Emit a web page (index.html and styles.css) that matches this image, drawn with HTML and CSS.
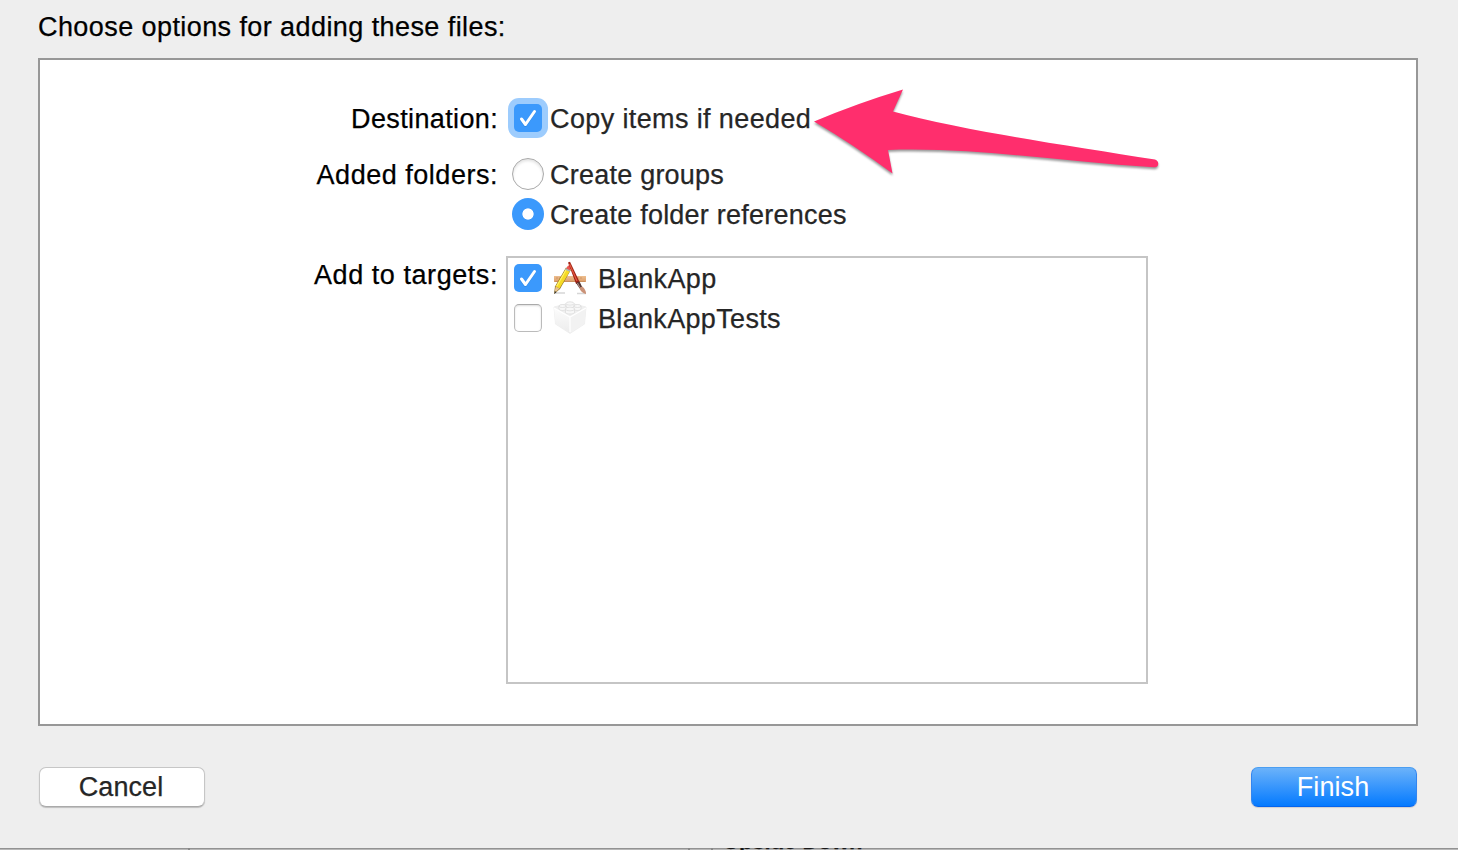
FILE: index.html
```html
<!DOCTYPE html>
<html lang="en">
<head>
<meta charset="utf-8">
<title>Add Files</title>
<link rel="stylesheet" href="styles.css">
</head>
<body>
<div class="backdrop"><span class="backdrop-label">Upside Down</span><i class="tick tick-a"></i><i class="tick tick-b"></i><i class="tick tick-c"></i></div>
<main class="sheet">
  <h1 class="title">Choose options for adding these files:</h1>
  <section class="panel">
    <div class="row row-destination">
      <span class="label destination">Destination:</span>
      <label class="option"><span class="slot"><span class="check checked focused"><svg viewBox="0 0 28 28"><path class="tick-shadow" d="M7.500 16l4 5.500L20.500 8"/><path class="tick-mark" d="M7.500 15l4 5.500L20.500 7.500"/></svg></span></span><span class="copy">Copy items if needed</span></label>
    </div>
    <div class="row row-folders">
      <span class="label folders">Added folders:</span>
      <div class="options">
        <label class="option"><span class="slot"><span class="radio"></span></span><span class="groups">Create groups</span></label>
        <label class="option"><span class="slot"><span class="radio selected"></span></span><span class="refs">Create folder references</span></label>
      </div>
    </div>
    <div class="row row-targets">
      <span class="label targets-label">Add to targets:</span>
      <div class="targets">
        <div class="target"><span class="check checked"><svg viewBox="0 0 28 28"><path class="tick-shadow" d="M7.500 16l4 5.500L20.500 8"/><path class="tick-mark" d="M7.500 15l4 5.500L20.500 7.500"/></svg></span>
          <svg class="icon" viewBox="0 0 36 36">
            <defs><linearGradient id="wood" x2="0" y2="1"><stop stop-color="#edbf90"/><stop offset="1" stop-color="#dc9c68"/></linearGradient></defs>
            <path d="M3 33h10M25 33.500h9" stroke="#bbb" stroke-width="1.500" opacity=".6"/>
            <path d="M2 16h32v6H2z" fill="url(#wood)"/>
            <path d="M3 21.500h30M5 17v2m3-2v2m3-2v2m12-2v2m3-2v2m3-2v2" stroke="#c48a58" stroke-width=".7"/>
            <path d="M14 7.500L3 26.500 2 34l6-5L18.800 10z" fill="#8b7023"/>
            <path d="M14.200 8.500L3.700 26.500l3.800 2L18.300 10.500z" fill="#f6da25"/>
            <path d="M14.500 9L4.800 26" stroke="#fff46a" stroke-width="1.200"/>
            <path d="M3.700 26.500L2.300 33.500 7.500 28.500z" fill="#e9c38f"/><path d="M2.900 31L2.300 34l2.200-1.800z" fill="#333"/>
            <path d="M14.200 8.500l1.500-2.600q2-1.500 3.500.700l.1 1.300-1.500 2.700z" fill="#ed5553"/><path d="M13.500 9l4.500 2.200" stroke="#aab5b4" stroke-width="1.500"/>
            <path d="M16 2.500l2-.7L27.800 22.500l-3.700 1.500z" fill="#9d2114"/>
            <path d="M17.500 4l7.500 17" stroke="#e65a40" stroke-width="1.200"/>
            <path d="M24 23l3.500-1.500 2.700 5.500-2.700 1.200z" fill="#563834"/><path d="M25.500 23l2.300 4.500" stroke="#bd9a91"/>
            <path d="M27.300 28l2.900-1.500q3.800 3 3.900 7.500-5-1-6.800-6z" fill="#ca9277"/>
          </svg><span class="blank">BlankApp</span></div>
        <div class="target"><span class="check"></span>
          <svg class="icon" viewBox="0 0 36 36">
            <defs><linearGradient id="face" x2="0" y2="1"><stop stop-color="#fcfcfc"/><stop offset="1" stop-color="#ececec"/></linearGradient></defs>
            <path d="M2 7L18 3l16 4-1.500 17L18 33.500 3.500 24z" fill="#f1f1f1" stroke="#e9e9e9" stroke-width=".7"/>
            <path d="M2 7L18 3l16 4-16 9z" fill="#efefef"/>
            <path d="M2 8l16 9v16L3.500 24z" fill="url(#face)"/><path d="M18 17l16-9-1.500 16L18 33z" fill="#f2f2f2"/>
            <g fill="#f8f8f8" stroke="#d8d8d8" stroke-width=".7"><path d="M14 3.500v3c1 2 7 2 8 0v-3z"/><ellipse cx="18" cy="3.500" rx="4" ry="1.700"/><path d="M7 6v3c1 2 6 2 7 0V6z"/><ellipse cx="10.500" cy="6" rx="3.500" ry="1.500"/><path d="M22 6v3c1 2 6 2 7 0V6z"/><ellipse cx="25.500" cy="6" rx="3.500" ry="1.500"/><path d="M13.500 9v3.500c1 2 8 2 9 0V9z"/><ellipse cx="18" cy="9" rx="4.500" ry="1.900"/></g>
            <path d="M2 8l16 9 16-9M18 17v15" fill="none" stroke="#fff" stroke-width="1.200"/>
          </svg><span class="tests">BlankAppTests</span></div>
      </div>
    </div>
    <svg class="arrow" viewBox="0 0 370 110"><path d="M14 41.500Q58 23 103 9.500L93 31.500C160 50 270 66 355 79.500C360 81 359 88 354 87.300C265 82 177 67 88 70L92.500 93.500Q54 65 14 41.500Z"/></svg>
  </section>
  <footer class="actions"><button class="button cancel"><span>Cancel</span></button><button class="button finish"><span>Finish</span></button></footer>
</main>
</body>
</html>
```
FILE: styles.css
```css
* { box-sizing: border-box; }
body { margin: 0; width: 1458px; height: 850px; overflow: hidden; position: relative; background: #b7b7b7; color: #000; font: 27px/32px "Liberation Sans", Arial, sans-serif; letter-spacing: .38px; -webkit-text-stroke: .25px currentColor; }
.backdrop { position: absolute; inset: 0; background: #b7b7b7; }
.backdrop-label { position: absolute; left: 723px; top: 826px; font-size: 22px; font-weight: bold; letter-spacing: 0; color: #181818; z-index: 2; clip-path: inset(22px 0 0 0); }
.tick { position: absolute; bottom: 0; width: 2px; height: 2px; background: #888; z-index: 2; }
.tick-a { left: 188px; }
.tick-b { left: 688px; }
.tick-c { left: 711px; }
.sheet { position: relative; height: 848px; padding: 11px 40px 0 38px; background: #eee; box-shadow: 0 1px #929292; }
.backdrop-label, .tick { z-index: 2; }
.title { margin: 0; font: inherit; letter-spacing: .42px; white-space: nowrap; }
.panel { position: relative; width: 1380px; height: 668px; margin-top: 15px; padding-top: 38px; border: 2px solid #979797; background: #fff; }
.row { display: grid; grid-template-columns: 458px 1fr; column-gap: 8px; white-space: nowrap; }
.label { text-align: right; padding-top: 5px; }
.destination { letter-spacing: .36px; }
.folders { letter-spacing: .52px; }
.groups, .refs { letter-spacing: .23px; }
.targets-label { letter-spacing: .56px; }
.tests { letter-spacing: .33px; }
.option { display: flex; align-items: center; height: 40px; gap: 3px; color: #262626; padding-left: 2px; }
.option > span:last-child { padding-top: 2px; }
.slot { display: grid; place-items: center; width: 36px; height: 40px; flex: none; margin-left: 2px; margin-right: 1px; }
.row-folders { margin-top: 16px; }
.row-targets { margin-top: 22px; }
.row-targets .label { padding-top: 3px; }
.check { display: block; flex: none; width: 28px; height: 28px; border: 1px solid #bbb; border-top-color: #aaa; border-radius: 5px; background: #fff; box-shadow: inset 0 1px 2px #ddd; }
.check svg { display: block; width: 28px; height: 28px; fill: none; stroke-linecap: round; stroke-linejoin: round; stroke-width: 3; }
.tick-mark { stroke: #fff; }
.tick-shadow { stroke: #247ed4; opacity: .5; }
.checked { border: 0; background: #3b99fc; box-shadow: none; }
.focused { box-shadow: 0 0 0 6px #9dccfd; }
.radio { display: block; width: 32px; height: 32px; border: 1px solid #aaa; border-radius: 50%; box-shadow: inset 0 2px 3px #e2e2e2; }
.selected { border: 0; background: radial-gradient(circle, #fff 5.2px, #3b99fc 6px); box-shadow: none; }
.targets { width: 642px; height: 428px; border: 2px solid #c5c5c5; color: #262626; }
.target { display: flex; align-items: center; height: 40px; padding-left: 6px; }
.icon { width: 36px; height: 36px; margin-left: 10px; margin-right: 10px; }
.target > span:last-child { padding-top: 2px; }
.arrow { position: absolute; left: 760px; top: 20px; width: 370px; height: 110px; fill: #ff2e6d; filter: drop-shadow(0 2px 1px #0006); }
.actions { display: flex; justify-content: space-between; margin-top: 41px; width: 1380px; padding: 0 1px; }
.button { width: 166px; height: 40px; padding: 0 2px 0 0; border-radius: 7px; font: inherit; letter-spacing: .1px; }
.cancel { border: 1px solid #c6c6c6; border-bottom-color: #aaa; background: #fff; color: #262626; box-shadow: 0 1px 1px #0003; }
.finish { border: 1px solid #3385ef; border-top-color: #4b9ef1; border-bottom-color: #0564ed; background: linear-gradient(#6bb2fa, #047aff); color: #fff; box-shadow: 0 1px 1px #0002; -webkit-text-stroke: 0; }
```
